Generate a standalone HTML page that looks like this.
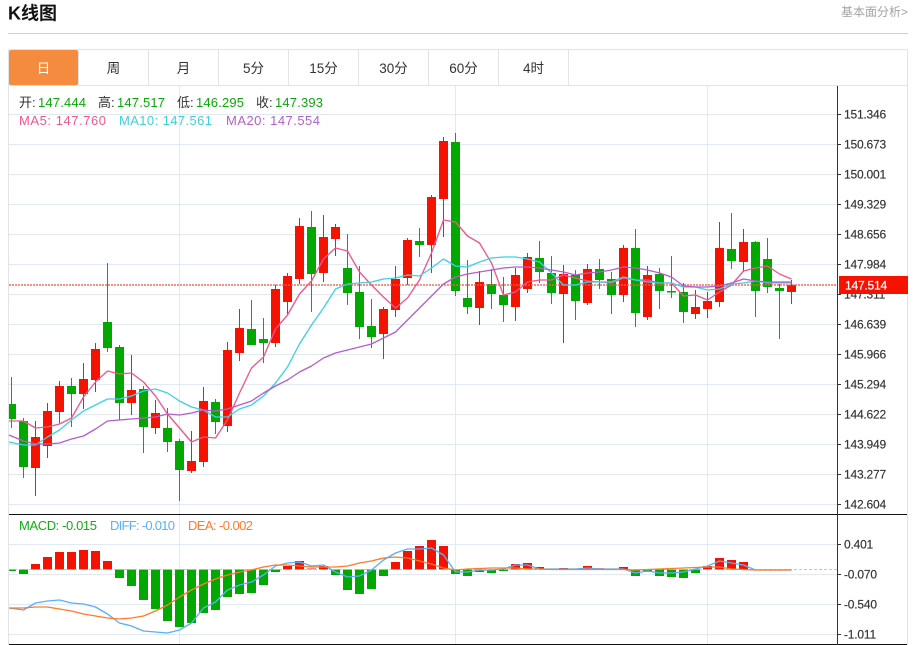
<!DOCTYPE html>
<html><head><meta charset="utf-8"><title>K线图</title>
<style>
html,body{margin:0;padding:0;background:#fff;width:913px;height:645px;overflow:hidden}
svg{display:block}
text{font-family:"Liberation Sans","Noto Sans CJK SC",sans-serif}
.ax{font-size:12px;fill:#333;stroke:#333;stroke-width:.15px}
.tab{font-size:13.5px;fill:#333;text-anchor:middle}
.i{font-size:13px}
.g{fill:#0aa80a}.k{fill:#333}
</style></head><body>
<svg width="913" height="645" viewBox="0 0 913 645" xmlns="http://www.w3.org/2000/svg">
<rect width="913" height="645" fill="#fff"/>
<text x="8" y="19.5" font-size="18" font-weight="bold" fill="#111">K线图</text>
<text x="841" y="16" font-size="12" fill="#a3a3a3">基本面分析&gt;</text>
<path d="M8 33.5H908" stroke="#cfcfcf" fill="none"/>
<!-- grid -->
<path d="M9 114.5H837M9 144.5H837M9 174.5H837M9 204.5H837M9 234.5H837M9 264.5H837M9 294.5H837M9 324.5H837M9 354.5H837M9 384.5H837M9 414.5H837M9 444.5H837M9 474.5H837M9 504.5H837M9 544.5H837M9 574.5H837M9 604.5H837M9 634.5H837M179.5 86V644M455.5 86V644M707.5 86V644" stroke="#e1eaf2" fill="none"/>
<!-- frame -->
<path d="M8.5 49V645M907.5 49V645M8 49.5H908M8 85.5H908M148.5 50V85M218.5 50V85M288.5 50V85M358.5 50V85M428.5 50V85M498.5 50V85M568.5 50V85" stroke="#e0e3e7" fill="none"/>
<rect x="9" y="50" width="69" height="35" rx="2" fill="#f48b3f"/>
<path d="M78.5 50V85" stroke="#e0e3e7"/>
<text x="43.5" y="73" class="tab" style="fill:#fff">日</text>
<text x="113.5" y="73" class="tab">周</text>
<text x="183.5" y="73" class="tab">月</text>
<text x="253.5" y="73" class="tab">5分</text>
<text x="323.5" y="73" class="tab">15分</text>
<text x="393.5" y="73" class="tab">30分</text>
<text x="463.5" y="73" class="tab">60分</text>
<text x="533.5" y="73" class="tab">4时</text>
<!-- candles green -->
<path stroke="#0aa80a" fill="none" d="M11.5 377V428M23.5 418V478M71.5 378V427M107.5 263V352M119.5 345V420M143.5 386V453M167.5 408V452M179.5 439V501M215.5 399V434M251.5 300V345M263.5 318V363M311.5 211V312M347.5 234V305M359.5 266V339M371.5 299V348M419.5 228V257M455.5 133V296M467.5 260V314M491.5 269V309M503.5 277V322M539.5 241V283M551.5 256V304M575.5 270V320M599.5 259V289M611.5 272V314M635.5 229V327M659.5 268V309M671.5 256V298M683.5 283V323M731.5 213V269M755.5 241V317M767.5 238V293M779.5 284V339"/>
<path fill="#00a800" d="M9 404H16V419H9zM19 421h9V467h-9zM67 386h9V394h-9zM103 322h9V348h-9zM115 347h9V403h-9zM139 389h9V427h-9zM163 428h9V442h-9zM175 441h9V470h-9zM211 402h9V422h-9zM247 329h9V345h-9zM259 339h9V343h-9zM307 227h9V274h-9zM343 268h9V293h-9zM355 292h9V327h-9zM367 326h9V337h-9zM415 241h9V245h-9zM451 142h9V291h-9zM463 298h9V307h-9zM487 284h9V294h-9zM499 295h9V305h-9zM535 258h9V272h-9zM547 273h9V293h-9zM571 275h9V301h-9zM595 269h9V280h-9zM607 279h9V295h-9zM631 248h9V313h-9zM655 274h9V291h-9zM667 291h9V292.5h-9zM679 292h9V312h-9zM727 249h9V261h-9zM751 242h9V291h-9zM763 259h9V287h-9zM775 288h9V291h-9z"/>
<!-- candles red -->
<path stroke="#ef1a0a" fill="none" d="M35.5 421V496M47.5 403V458M59.5 381V423M83.5 363V409M95.5 343V392M131.5 355V415M155.5 400V434M191.5 431V473M203.5 387V467M227.5 342V432M239.5 309V361M275.5 285V347M287.5 273V315M299.5 218V284M323.5 215V282M335.5 224V256M383.5 307V359M395.5 266V317M407.5 238V285M431.5 195V273M443.5 137V237M479.5 271V325M515.5 268V321M527.5 253V293M563.5 265V343M587.5 264V305M623.5 245V302M647.5 266V320M695.5 290V319M707.5 292V318M719.5 222V307M743.5 229V272M791.5 280V304"/>
<path fill="#f51200" d="M31 437h9V468h-9zM43 411h9V446h-9zM55 386h9V412h-9zM79 379h9V394h-9zM91 349h9V380h-9zM127 390h9V403h-9zM151 413h9V428h-9zM187 461h9V471h-9zM199 401h9V462h-9zM223 350h9V426h-9zM235 328h9V353h-9zM271 289h9V343h-9zM283 276h9V302h-9zM295 226h9V279h-9zM319 237h9V273h-9zM331 227h9V239h-9zM379 309h9V334h-9zM391 279h9V310h-9zM403 240h9V278h-9zM427 197h9V245h-9zM439 141h9V199h-9zM475 282h9V308h-9zM511 275h9V307h-9zM523 257h9V289h-9zM559 274h9V294h-9zM583 269h9V303h-9zM619 248h9V295h-9zM643 275h9V317h-9zM691 307h9V314h-9zM703 301h9V309h-9zM715 248h9V302h-9zM739 242h9V262h-9zM787 285h9V292h-9z"/>
<!-- price line -->
<path d="M9 285H837" stroke="#f55a50" stroke-width="1.6" stroke-dasharray="2 1" fill="none" opacity=".9"/>
<!-- MA lines -->
<g fill="none" stroke-width="1.35" stroke-linejoin="round">
<polyline stroke="#f2568c" points="9,421 23.5,421 35.5,428 47.5,427 59.5,424 71.5,418 83.5,397 95.5,382 107.5,371 119.5,374 131.5,373 143.5,382 155.5,396 167.5,414 179.5,428 191.5,442 203.5,437 215.5,438 227.5,420 239.5,393 251.5,368 263.5,357 275.5,329 287.5,315 299.5,294 311.5,281 323.5,259 335.5,248 347.5,251 359.5,272 371.5,285 383.5,297 395.5,308 407.5,298 419.5,280 431.5,253 443.5,220 455.5,222 467.5,236 479.5,243 491.5,263 503.5,295 515.5,292 527.5,282 539.5,280 551.5,280 563.5,275 575.5,278 587.5,281 599.5,282 611.5,283 623.5,278 635.5,280 647.5,280 659.5,283 671.5,283 683.5,296 695.5,295 707.5,300 719.5,292 731.5,285 743.5,271 755.5,268 767.5,266 779.5,274 791.5,279"/>
<polyline stroke="#3fd0e6" points="9,442 23.5,445 35.5,445 47.5,437 59.5,430 71.5,420 83.5,411 95.5,405 107.5,399 119.5,399 131.5,396 143.5,391 155.5,389 167.5,393 179.5,401 191.5,407 203.5,410 215.5,417 227.5,417 239.5,409 251.5,405 263.5,396 275.5,383 287.5,367 299.5,344 311.5,325 323.5,308 335.5,289 347.5,284 359.5,283 371.5,282 383.5,279 395.5,278 407.5,275 419.5,276 431.5,268 443.5,259 455.5,266 467.5,267 479.5,262 491.5,258 503.5,257 515.5,257 527.5,259 539.5,262 551.5,273 563.5,285 575.5,285 587.5,282 599.5,282 611.5,282 623.5,277 635.5,280 647.5,282 659.5,283 671.5,283 683.5,287 695.5,287 707.5,290 719.5,289 731.5,284 743.5,283 755.5,281 767.5,283 779.5,283 791.5,283"/>
<polyline stroke="#b45ecc" points="9,435 23.5,441 35.5,444 47.5,444 59.5,443 71.5,439 83.5,436 95.5,429 107.5,421 119.5,420 131.5,419 143.5,418 155.5,417 167.5,414 179.5,415 191.5,413 203.5,410 215.5,411 227.5,409 239.5,405 251.5,401 263.5,393 275.5,386 287.5,380 299.5,372 311.5,366 323.5,358 335.5,353 347.5,350 359.5,347 371.5,344 383.5,338 395.5,332 407.5,320 419.5,308 431.5,296 443.5,284 455.5,277 467.5,274 479.5,272 491.5,270 503.5,268 515.5,267 527.5,267 539.5,268 551.5,270 563.5,272 575.5,275 587.5,273 599.5,272 611.5,270 623.5,267 635.5,268 647.5,270 659.5,273 671.5,277 683.5,286 695.5,287 707.5,287 719.5,286 731.5,283 743.5,279 755.5,281 767.5,282 779.5,282 791.5,282"/>
</g>
<!-- info text -->
<text y="107" class="i"><tspan x="19" class="k">开:</tspan><tspan x="38" class="g" textLength="48">147.444</tspan><tspan x="98" class="k">高:</tspan><tspan x="117" class="g" textLength="48">147.517</tspan><tspan x="177" class="k">低:</tspan><tspan x="196" class="g" textLength="48">146.295</tspan><tspan x="256" class="k">收:</tspan><tspan x="275" class="g" textLength="48">147.393</tspan></text>
<text y="125" class="i" fill="#f2568c" x="19" textLength="87">MA5: 147.760</text>
<text y="125" class="i" fill="#3fcde3" x="119" textLength="93">MA10: 147.561</text>
<text y="125" class="i" fill="#b45ecc" x="226" textLength="94">MA20: 147.554</text>
<!-- MACD separators -->
<path d="M9 514.5H907M9 644.5H907" stroke="#111" fill="none"/>
<text y="530" class="i" fill="#13ab13" x="19" textLength="78">MACD: -0.015</text>
<text y="530" class="i" fill="#5ab0f5" x="110" textLength="65">DIFF: -0.010</text>
<text y="530" class="i" fill="#ff7a2a" x="188" textLength="65">DEA: -0.002</text>
<!-- MACD bars -->
<path fill="#00a800" d="M9 569.5H16V571H9zM19 569.5h9V574h-9zM115 569.5h9V578h-9zM127 569.5h9V586h-9zM139 569.5h9V600h-9zM151 569.5h9V609h-9zM163 569.5h9V621h-9zM175 569.5h9V627h-9zM187 569.5h9V623h-9zM199 569.5h9V613h-9zM211 569.5h9V610h-9zM223 569.5h9V597h-9zM235 569.5h9V594h-9zM247 569.5h9V593h-9zM259 569.5h9V585h-9zM271 569.5h9V572h-9zM331 569.5h9V575h-9zM343 569.5h9V590h-9zM355 569.5h9V594h-9zM367 569.5h9V589h-9zM379 569.5h9V576h-9zM451 569.5h9V574h-9zM463 569.5h9V576h-9zM475 569.5h9V572h-9zM487 569.5h9V573h-9zM499 569.5h9V571h-9zM631 569.5h9V576h-9zM643 569.5h9V572h-9zM655 569.5h9V576h-9zM667 569.5h9V577h-9zM679 569.5h9V578h-9zM691 569.5h9V573h-9zM751 569.5h9V570.5h-9z"/>
<path fill="#f51200" d="M31 564h9V569.5h-9zM43 557h9V569.5h-9zM55 552h9V569.5h-9zM67 552h9V569.5h-9zM79 550h9V569.5h-9zM91 551h9V569.5h-9zM103 561h9V569.5h-9zM283 566h9V569.5h-9zM295 561h9V569.5h-9zM319 566h9V569.5h-9zM391 562h9V569.5h-9zM403 551h9V569.5h-9zM415 546h9V569.5h-9zM427 540h9V569.5h-9zM439 546h9V569.5h-9zM511 564h9V569.5h-9zM523 563h9V569.5h-9zM535 567h9V569.5h-9zM559 568h9V569.5h-9zM583 566h9V569.5h-9zM619 567h9V569.5h-9zM715 558h9V569.5h-9zM727 560h9V569.5h-9zM739 562h9V569.5h-9zM703 566h9V569.5h-9z"/>
<path fill="#f98a80" d="M307 568h9V569.5h-9zM595 568h9V569.5h-9z"/>
<path d="M9 569.5H837" stroke="#8cc4d8" stroke-dasharray="3 2" fill="none" opacity=".8"/>
<g fill="none" stroke-width="1.35" stroke-linejoin="round">
<polyline stroke="#5ab0f5" points="9,608 23.5,610 35.5,603 47.5,601 59.5,600 71.5,603 83.5,604 95.5,607 107.5,614 119.5,623 131.5,626 143.5,631 155.5,632 167.5,633 179.5,630 191.5,623 203.5,608 215.5,602 227.5,590 239.5,585 251.5,582 263.5,575 275.5,566 287.5,563 299.5,562 311.5,566 323.5,565 335.5,572 347.5,577 359.5,576 371.5,570 383.5,560 395.5,553 407.5,549 419.5,549 431.5,548 443.5,555 455.5,572 467.5,572 479.5,570 491.5,570 503.5,569 515.5,565 527.5,565 539.5,569 551.5,569 563.5,569 575.5,569 587.5,568 599.5,569 611.5,569 623.5,569 635.5,573 647.5,571 659.5,573 671.5,573 683.5,572 695.5,569 707.5,566 719.5,561 731.5,563 743.5,565 755.5,570 767.5,570 791.5,570"/>
<polyline stroke="#ff7a2a" points="9,608 23.5,608 35.5,607 47.5,607 59.5,609 71.5,611 83.5,614 95.5,616 107.5,618 119.5,619 131.5,618 143.5,616 155.5,611 167.5,605 179.5,597 191.5,590 203.5,584 215.5,579 227.5,575 239.5,572 251.5,570 263.5,567 275.5,565 287.5,565 299.5,566 311.5,567 323.5,567 335.5,567 347.5,566 359.5,563 371.5,561 383.5,558 395.5,557 407.5,558 419.5,561 431.5,564 443.5,568 455.5,570 467.5,569 479.5,568.5 491.5,568 503.5,568 515.5,568 527.5,569 539.5,569 551.5,569.5 623.5,569.5 635.5,570 659.5,569 683.5,568 707.5,567 719.5,567 731.5,569 743.5,569.5 755.5,570 791.5,570"/>
</g>
<!-- axis -->
<path d="M837.5 86V645M838 114.5h3M838 144.5h3M838 174.5h3M838 204.5h3M838 234.5h3M838 264.5h3M838 294.5h3M838 324.5h3M838 354.5h3M838 384.5h3M838 414.5h3M838 444.5h3M838 474.5h3M838 504.5h3M838 544.5h3M838 574.5h3M838 604.5h3M838 634.5h3" stroke="#333" fill="none"/>
<g style="letter-spacing:-.2px">
<text x="844" y="118.5" class="ax">151.346</text>
<text x="844" y="148.5" class="ax">150.673</text>
<text x="844" y="178.5" class="ax">150.001</text>
<text x="844" y="208.5" class="ax">149.329</text>
<text x="844" y="238.5" class="ax">148.656</text>
<text x="844" y="268.5" class="ax">147.984</text>
<text x="844" y="298.5" class="ax">147.311</text>
<text x="844" y="328.5" class="ax">146.639</text>
<text x="844" y="358.5" class="ax">145.966</text>
<text x="844" y="388.5" class="ax">145.294</text>
<text x="844" y="418.5" class="ax">144.622</text>
<text x="844" y="448.5" class="ax">143.949</text>
<text x="844" y="478.5" class="ax">143.277</text>
<text x="844" y="508.5" class="ax">142.604</text>
<text x="844" y="548.5" class="ax">0.401</text>
<text x="844" y="578.5" class="ax">-0.070</text>
<text x="844" y="608.5" class="ax">-0.540</text>
<text x="844" y="638.5" class="ax">-1.011</text>
</g>
<rect x="839" y="276" width="69" height="18" fill="#f51200"/>
<text x="845" y="289.5" font-size="12" fill="#fff" stroke="#fff" stroke-width=".2" style="letter-spacing:-.2px">147.514</text>
</svg>
</body></html>
